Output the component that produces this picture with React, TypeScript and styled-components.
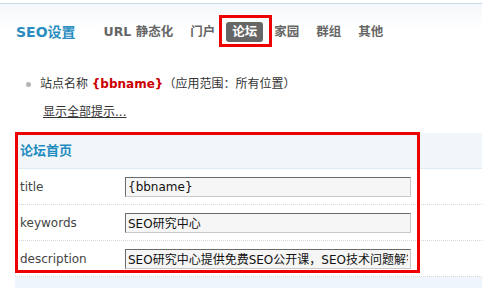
import React from "react";
import styled, { createGlobalStyle } from "styled-components";

const Global = createGlobalStyle`
  html, body { margin: 0; padding: 0; background: #fff; }
  body {
    font: 12px "DejaVu Sans", "Noto Sans CJK SC", sans-serif;
    color: #333;
    width: 482px;
    height: 288px;
    overflow: hidden;
  }
`;

const Page = styled.div`
  width: 482px;
  height: 288px;
  overflow: hidden;
  display: flex;
  flex-direction: column;
`;

const Header = styled.header`
  flex: none;
  height: 59px;
  box-sizing: border-box;
  padding-top: 3px;
  background: #fff;
  position: relative;
  z-index: 1;
`;

const TopRule = styled.div`
  height: 1px;
  background: #c9dae7;
`;

const HeaderBar = styled.div`
  height: 55px;
  display: flex;
  align-items: center;
  padding-left: 16px;
  background: linear-gradient(#f3f7fb, #fff 45%);
`;

const Title = styled.h1`
  margin: 0 22px 0 0;
  font-size: 14px;
  font-weight: bold;
  color: #2a8dbf;
  line-height: 20px;
`;

const Nav = styled.nav`
  display: flex;
  gap: 5px;
`;

const NavItem = styled.span<{ $active?: boolean; $marked?: boolean }>`
  position: relative;
  padding: 3px 6px;
  line-height: 14px;
  font-size: 12.5px;
  font-weight: bold;
  border-radius: 3px;
  color: ${(p) => (p.$active ? "#fff" : "#666")};
  background: ${(p) => (p.$active ? "#666" : "transparent")};
  ${(p) =>
    p.$marked &&
    `&::after {
      content: "";
      position: absolute;
      top: -7px;
      left: -7px;
      right: -9px;
      bottom: -5px;
      border: 3px solid #e00;
    }`}
`;

const Main = styled.main`
  flex: 1;
  overflow: hidden;
`;

const TipList = styled.ul`
  list-style: none;
  margin: -20px 0 0 0;
  padding: 0 0 0 40px;
`;

const Tip = styled.li<{ $lead?: boolean }>`
  position: relative;
  line-height: ${(p) => (p.$lead ? 31 : 28)}px;
  &::before {
    content: "";
    position: absolute;
    left: -14px;
    top: ${(p) => (p.$lead ? 13 : 12)}px;
    width: 5px;
    height: 5px;
    border-radius: 50%;
    background: #b5b5b5;
  }
`;

const Var = styled.strong`
  color: #c00;
  font-weight: bold;
`;

const MoreLink = styled.a`
  display: block;
  margin-left: 43px;
  line-height: 28px;
  color: #333;
  text-decoration: underline;
  width: max-content;
`;

const Section = styled.section`
  position: relative;
  margin: 7px 0 0 15px;
`;

const Marker = styled.div`
  position: absolute;
  top: -1px;
  left: 0;
  width: 405px;
  height: 141px;
  box-sizing: border-box;
  border: 3px solid #e00;
  pointer-events: none;
`;

const SectionHead = styled.h2`
  margin: 0;
  height: 36px;
  box-sizing: border-box;
  padding-left: 5px;
  line-height: 36px;
  font-size: 13px;
  font-weight: bold;
  color: #1f8cc0;
  background: #f1f6fb;
  border-bottom: 1px solid #e2eaf1;
`;

const NextHead = styled(SectionHead)`
  margin-left: 15px;
  background: #eef5fc;
  border: 0;
`;

const Row = styled.div`
  display: grid;
  grid-template-columns: 110px 1fr;
  align-items: center;
  height: 36px;
  box-sizing: border-box;
  border-bottom: 1px dotted #d6d6d6;
`;

const Label = styled.label`
  padding-left: 5px;
  color: #444;
`;

const Field = styled.input`
  width: 286px;
  height: 20px;
  box-sizing: border-box;
  margin: 0;
  padding: 0 2px;
  border: 1px solid;
  border-color: #6a6a6a #c8c8c8 #c8c8c8 #6a6a6a;
  background: #f6f6f6;
  font: 12px "DejaVu Sans", "Noto Sans CJK SC", sans-serif;
  color: #111;
  outline: none;
`;

const navItems = ["URL 静态化", "门户", "论坛", "家园", "群组", "其他"];

const fields = [
  { name: "title", value: "{bbname}" },
  { name: "keywords", value: "SEO研究中心" },
  {
    name: "description",
    value: "SEO研究中心提供免费SEO公开课，SEO技术问题解答，SEO优化培训",
  },
];

export default function App() {
  return (
    <Page>
      <Global />
      <Header>
        <TopRule />
        <HeaderBar>
          <Title>SEO设置</Title>
          <Nav>
            {navItems.map((n) => (
              <NavItem key={n} $active={n === "论坛"} $marked={n === "论坛"}>
                {n}
              </NavItem>
            ))}
          </Nav>
        </HeaderBar>
      </Header>
      <Main>
        <TipList>
          <Tip $lead>当前页面的标题　　全局</Tip>
          <Tip>
            站点名称 <Var>{"{bbname}"}</Var>（应用范围：所有位置）
          </Tip>
        </TipList>
        <MoreLink href="#">显示全部提示...</MoreLink>
        <Section>
          <SectionHead>论坛首页</SectionHead>
          {fields.map((f) => (
            <Row key={f.name}>
              <Label>{f.name}</Label>
              <Field readOnly value={f.value} />
            </Row>
          ))}
          <Marker />
        </Section>
        <NextHead>论坛版块</NextHead>
      </Main>
    </Page>
  );
}
